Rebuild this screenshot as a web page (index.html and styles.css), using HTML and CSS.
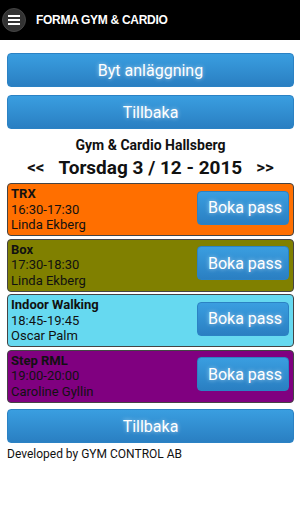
FILE: index.html
```html
<!DOCTYPE html>
<html lang="sv">
<head>
    <meta charset="UTF-8" />
    <meta name="viewport" content="width=device-width, initial-scale=1.0" />
    <title>Forma Gym &amp; Cardio</title>
    <link rel="stylesheet" href="styles.css">
</head>
<body>

    <header class="topbar">
        <button class="menu-btn" aria-label="Meny">
            <svg width="12" height="10" viewBox="0 0 12 10">
                <rect x="0" y="0" width="12" height="2" fill="#fff" />
                <rect x="0" y="4" width="12" height="2" fill="#fff" />
                <rect x="0" y="8" width="12" height="2" fill="#fff" />
            </svg>
        </button>
        <span class="app-title">FORMA GYM &amp; CARDIO</span>
    </header>

    <main class="content">
        <a href="#" class="btn btn-wide">Byt anläggning</a>
        <a href="#" class="btn btn-wide">Tillbaka</a>

        <h3 class="gym-name">Gym &amp; Cardio Hallsberg</h3>
        <div class="day-nav">
            <a href="#" class="day-arrow">&lt;&lt;</a>
            <span class="day-label">Torsdag 3 / 12 - 2015</span>
            <a href="#" class="day-arrow">&gt;&gt;</a>
        </div>

        <div class="session trx">
            <div class="session-info">
                <div class="session-name">TRX</div>
                <div>16:30-17:30</div>
                <div>Linda Ekberg</div>
            </div>
            <a href="#" class="btn btn-book">Boka pass</a>
        </div>

        <div class="session box">
            <div class="session-info">
                <div class="session-name">Box</div>
                <div>17:30-18:30</div>
                <div>Linda Ekberg</div>
            </div>
            <a href="#" class="btn btn-book">Boka pass</a>
        </div>

        <div class="session walking">
            <div class="session-info">
                <div class="session-name">Indoor Walking</div>
                <div>18:45-19:45</div>
                <div>Oscar Palm</div>
            </div>
            <a href="#" class="btn btn-book">Boka pass</a>
        </div>

        <div class="session step">
            <div class="session-info">
                <div class="session-name">Step RML</div>
                <div>19:00-20:00</div>
                <div>Caroline Gyllin</div>
            </div>
            <a href="#" class="btn btn-book">Boka pass</a>
        </div>

        <a href="#" class="btn btn-wide btn-bottom">Tillbaka</a>

        <p class="footer">Developed by GYM CONTROL AB</p>
    </main>

</body>
</html>
```

FILE: styles.css
```css
/* Global styles */
body {
    font-family: Roboto, "Noto Sans", sans-serif;
    background-color: #fff;
    margin: 0;
    color: #111;
}

/* Top bar */
.topbar {
    height: 40px;
    background-color: #000;
    display: flex;
    align-items: center;
    padding-left: 2px;
}

.menu-btn {
    width: 24px;
    height: 24px;
    border-radius: 50%;
    background-color: #333;
    border: 1px solid #444;
    padding: 0;
    display: flex;
    justify-content: center;
    align-items: center;
    box-sizing: border-box;
}

.app-title {
    margin-left: 10px;
    color: #fff;
    font-family: "Liberation Sans", Arial, sans-serif;
    font-weight: bold;
    font-size: 12px;
    letter-spacing: -0.3px;
}

.content {
    padding: 13px 6px 0 7px;
    display: flex;
    flex-direction: column;
}

/* Buttons */
.btn {
    display: flex;
    justify-content: center;
    align-items: center;
    color: #fff;
    text-decoration: none;
    background: linear-gradient(#3a9ee0, #2a7fc2);
    border: 1px solid #2b82c4;
    border-radius: 4px;
    text-shadow: 0 0 4px rgba(255, 255, 255, 0.6);
    box-sizing: border-box;
}

.btn-wide {
    height: 34px;
    font-size: 16px;
    margin-bottom: 8px;
}

.btn-bottom {
    margin-top: 4px;
    margin-bottom: 0;
}

.gym-name {
    margin: 0;
    text-align: center;
    font-size: 14px;
    font-weight: bold;
    line-height: 16px;
}

.day-nav {
    display: flex;
    justify-content: center;
    align-items: center;
    gap: 14px;
    font-weight: bold;
    height: 28px;
    margin-bottom: 2px;
}

.day-arrow {
    color: #111;
    text-decoration: none;
    font-size: 17px;
}

.day-label {
    font-size: 19px;
}

/* Session cards */
.session {
    display: flex;
    align-items: center;
    justify-content: space-between;
    height: 53px;
    box-sizing: border-box;
    border: 1px solid #444;
    border-radius: 4px;
    padding: 0 4px 0 3px;
    margin-bottom: 2.5px;
}

.session-info {
    font-size: 13px;
    line-height: 15.5px;
}

.session-name {
    font-weight: bold;
}

.btn-book {
    width: 92px;
    height: 34px;
    font-size: 16px;
    margin-top: -4px;
    justify-content: flex-end;
    padding-right: 6px;
}

.trx {
    background-color: #ff6f00;
}

.box {
    background-color: #808000;
}

.walking {
    background-color: #66d9f0;
}

.step {
    background-color: #800080;
}

.footer {
    margin: 4px 0 0;
    font-size: 12px;
}
```
